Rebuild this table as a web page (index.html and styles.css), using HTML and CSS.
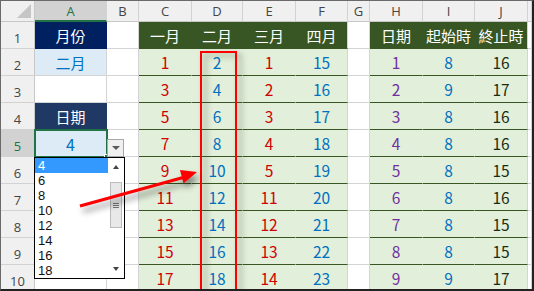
FILE: index.html
```html
<!DOCTYPE html>
<html lang="zh-Hant">
<head>
<meta charset="utf-8">
<link rel="stylesheet" href="styles.css">
</head>
<body>
<div class="frame">
  <div class="sheet">
    <div class="corner"><span class="tri"></span></div>
    <div class="ch sel">A</div><div class="ch">B</div><div class="ch">C</div><div class="ch">D</div><div class="ch">E</div><div class="ch">F</div><div class="ch">G</div><div class="ch">H</div><div class="ch">I</div><div class="ch">J</div><div class="ch"></div>

    <div class="rh">1</div><div class="c nv">月份</div><div class="c"></div><div class="c gh">一月</div><div class="c gh">二月</div><div class="c gh">三月</div><div class="c gh end">四月</div><div class="c"></div><div class="c gh">日期</div><div class="c gh">起始時</div><div class="c gh end">終止時</div><div class="c"></div>

    <div class="rh">2</div><div class="c lb">二月</div><div class="c"></div><div class="c g r">1</div><div class="c g b">2</div><div class="c g r">1</div><div class="c g b end">15</div><div class="c"></div><div class="c g p">1</div><div class="c g b">8</div><div class="c g k end">16</div><div class="c"></div>

    <div class="rh">3</div><div class="c"></div><div class="c"></div><div class="c g r">3</div><div class="c g b">4</div><div class="c g r">2</div><div class="c g b end">16</div><div class="c"></div><div class="c g p">2</div><div class="c g b">9</div><div class="c g k end">17</div><div class="c"></div>

    <div class="rh">4</div><div class="c nv2">日期</div><div class="c"></div><div class="c g r">5</div><div class="c g b">6</div><div class="c g r">3</div><div class="c g b end">17</div><div class="c"></div><div class="c g p">3</div><div class="c g b">8</div><div class="c g k end">16</div><div class="c"></div>

    <div class="rh sel">5</div><div class="c lb sv">4</div><div class="c"></div><div class="c g r">7</div><div class="c g b">8</div><div class="c g r">4</div><div class="c g b end">18</div><div class="c"></div><div class="c g p">4</div><div class="c g b">8</div><div class="c g k end">16</div><div class="c"></div>

    <div class="rh">6</div><div class="c"></div><div class="c"></div><div class="c g r">9</div><div class="c g b">10</div><div class="c g r">5</div><div class="c g b end">19</div><div class="c"></div><div class="c g p">5</div><div class="c g b">8</div><div class="c g k end">15</div><div class="c"></div>

    <div class="rh">7</div><div class="c"></div><div class="c"></div><div class="c g r">11</div><div class="c g b">12</div><div class="c g r">11</div><div class="c g b end">20</div><div class="c"></div><div class="c g p">6</div><div class="c g b">8</div><div class="c g k end">16</div><div class="c"></div>

    <div class="rh">8</div><div class="c"></div><div class="c"></div><div class="c g r">13</div><div class="c g b">14</div><div class="c g r">12</div><div class="c g b end">21</div><div class="c"></div><div class="c g p">7</div><div class="c g b">8</div><div class="c g k end">15</div><div class="c"></div>

    <div class="rh">9</div><div class="c"></div><div class="c"></div><div class="c g r">15</div><div class="c g b">16</div><div class="c g r">13</div><div class="c g b end">22</div><div class="c"></div><div class="c g p">8</div><div class="c g b">8</div><div class="c g k end">15</div><div class="c"></div>

    <div class="rh">10</div><div class="c"></div><div class="c"></div><div class="c g r">17</div><div class="c g b">18</div><div class="c g r">14</div><div class="c g b end">23</div><div class="c"></div><div class="c g p">9</div><div class="c g b">9</div><div class="c g k end">17</div><div class="c"></div>
  </div>

  <div class="selbox"><span class="handle"></span></div>
  <div class="ddbtn"><span class="dtri"></span></div>
  <div class="dropdown">
    <ul class="items">
      <li class="hi">4</li><li>6</li><li>8</li><li>10</li><li>12</li><li>14</li><li>16</li><li>18</li>
    </ul>
    <div class="scroll">
      <span class="up"></span>
      <span class="thumb"><span class="grip"></span></span>
      <span class="down"></span>
    </div>
  </div>
  <div class="redbox"></div>
  <svg class="arrow" width="532" height="289" viewBox="0 0 532 289">
    <g class="arrowg">
      <line x1="79" y1="205" x2="184" y2="176" stroke="#ff0000" stroke-width="3.2"/>
      <polygon points="196,171 182.5,182.5 179,169" fill="#ff0000"/>
    </g>
  </svg>
</div>
</body>
</html>
```

FILE: styles.css
```css
* { box-sizing: border-box; }
html, body { margin: 0; padding: 0; background: #fff; }
body { width: 534px; height: 291px; overflow: hidden; }

.frame {
  position: relative;
  width: 534px;
  height: 291px;
  border-top: 1px solid #6a6a6a;
  border-left: 1px solid #6a6a6a;
  border-right: 2px solid #222;
  border-bottom: 2px solid #222;
  overflow: hidden;
  font-family: "Noto Sans CJK TC", "Noto Sans", sans-serif;
}

.sheet {
  display: grid;
  grid-template-columns: 34px 72px 32px 53px 51px 53px 52px 22px 53px 52px 53px 1fr;
  grid-template-rows: 21px repeat(10, 27px);
}

.corner {
  position: relative;
  background: #f0f0f0;
  border-right: 1px solid #c8c8c8;
  border-bottom: 1px solid #c8c8c8;
}
.tri {
  position: absolute;
  right: 3px;
  bottom: 3px;
  width: 0; height: 0;
  border-left: 14px solid transparent;
  border-bottom: 14px solid #c6c6c6;
}

.ch {
  background: #f0f0f0;
  border-right: 1px solid #d2d2d2;
  border-bottom: 1px solid #c8c8c8;
  color: #454545;
  font-family: "Open Sans", "Noto Sans", sans-serif;
  font-size: 13px;
  display: flex;
  align-items: center;
  justify-content: center;
}
.ch.sel {
  background: #d2d2d2;
  color: #217346;
  border-bottom: 2px solid #217346;
}

.rh {
  background: #f0f0f0;
  border-right: 1px solid #c8c8c8;
  border-bottom: 1px solid #d2d2d2;
  color: #454545;
  font-family: "Open Sans", "Noto Sans", sans-serif;
  font-size: 13px;
  display: flex;
  align-items: center;
  justify-content: center;
  padding-top: 5px;
}
.rh.sel {
  background: #d2d2d2;
  color: #217346;
}

.c {
  border-right: 1px solid #d4d4d4;
  border-bottom: 1px solid #d4d4d4;
  display: flex;
  align-items: center;
  justify-content: center;
  font-size: 15px;
  line-height: 1;
  padding-top: 1px;
}

.nv { background: #002060; color: #fff; border-color: #002060; }
.nv2 { background: #203864; color: #fff; border-color: #203864; }
.lb { background: #ddebf7; color: #0070c0; }
.sv { font-size: 16px; }

.gh { background: #375623; color: #fff; border-right-color: #375623; border-bottom-color: #375623; }
.g { background: #e2efda; border-right-color: #e2efda; border-bottom-color: #375623; font-size: 15.5px; }
.gh.end, .g.end { border-right-color: #d4d4d4; }

.r { color: #d00000; }
.b { color: #0070c0; }
.p { color: #7030a0; }
.k { color: #1b2d10; }

.selbox {
  position: absolute;
  left: 33px;
  top: 128px;
  width: 74px;
  height: 29px;
  border: 2px solid #217346;
}
.handle {
  position: absolute;
  right: -4px;
  bottom: -4px;
  width: 6px;
  height: 6px;
  background: #217346;
  border: 1px solid #fff;
}

.ddbtn {
  position: absolute;
  left: 106px;
  top: 138px;
  width: 17px;
  height: 18px;
  background: #f0f0f0;
  border: 1px solid #a8a8a8;
  display: flex;
  align-items: center;
  justify-content: center;
}
.dtri {
  width: 0; height: 0;
  border-left: 4px solid transparent;
  border-right: 4px solid transparent;
  border-top: 4px solid #5a5a5a;
}

.dropdown {
  position: absolute;
  left: 33px;
  top: 156px;
  width: 91px;
  height: 122px;
  border: 1px solid #000;
  background: #fff;
  display: flex;
}
.items {
  list-style: none;
  margin: 0;
  padding: 0;
  width: 73px;
  font-family: "Liberation Sans", "DejaVu Sans", sans-serif;
  font-size: 13px;
  color: #111;
}
.items li {
  height: 15px;
  line-height: 15px;
  padding-left: 3px;
}
.items li.hi { background: #3399ff; color: #fff; }

.scroll {
  flex: 1;
  position: relative;
  background: #fff;
  display: flex;
  flex-direction: column;
  align-items: center;
}
.up {
  margin-top: 7px;
  width: 0; height: 0;
  border-left: 3.5px solid transparent;
  border-right: 3.5px solid transparent;
  border-bottom: 4px solid #444;
}
.thumb {
  margin-top: 13px;
  width: 12px;
  height: 46px;
  background: #e8e8e8;
  border: 1px solid #bcbcbc;
  display: flex;
  align-items: center;
  justify-content: center;
}
.grip {
  width: 6px;
  height: 5px;
  border-top: 1px solid #777;
  border-bottom: 1px solid #777;
  position: relative;
}
.grip::after {
  content: "";
  position: absolute;
  left: 0; right: 0; top: 1px;
  border-top: 1px solid #777;
}
.down {
  margin-top: auto;
  margin-bottom: 7px;
  width: 0; height: 0;
  border-left: 3.5px solid transparent;
  border-right: 3.5px solid transparent;
  border-top: 4px solid #444;
}

.redbox {
  position: absolute;
  left: 199px;
  top: 50px;
  width: 37px;
  height: 260px;
  border: 2px solid #ff0000;
  filter: drop-shadow(4px 3px 3px rgba(60, 70, 50, 0.55));
}

.arrow {
  position: absolute;
  left: 0;
  top: 0;
  pointer-events: none;
}
.arrowg {
  filter: drop-shadow(3px 5px 3px rgba(0, 0, 0, 0.45));
}
```
